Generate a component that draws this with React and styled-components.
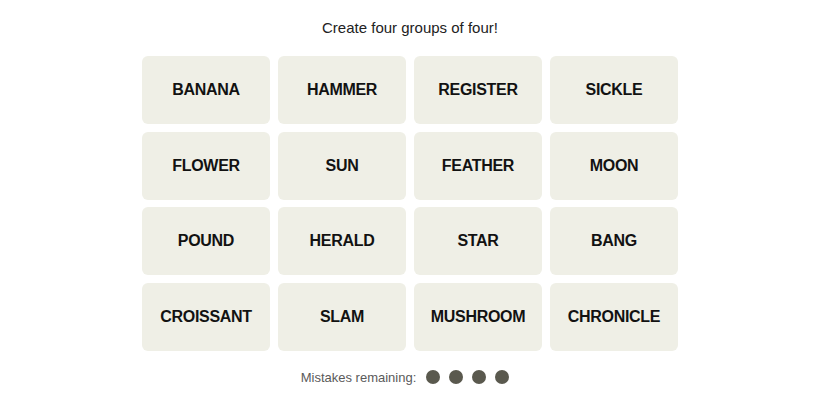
import React from "react";
import styled, { createGlobalStyle } from "styled-components";

const GlobalStyle = createGlobalStyle`
  body {
    margin: 0;
    background: #ffffff;
    font-family: "Liberation Sans", Arial, sans-serif;
  }
`;

const Page = styled.div`
  width: 820px;
  display: flex;
  flex-direction: column;
  align-items: center;
  padding-top: 18px;
`;

const Title = styled.p`
  margin: 0;
  height: 20px;
  line-height: 20px;
  font-size: 15px;
  color: #222;
  font-family: "Liberation Sans", Arial, sans-serif;
`;

const Grid = styled.div`
  margin-top: 18px;
  display: grid;
  grid-template-columns: repeat(4, 128.5px);
  grid-auto-rows: 68px;
  gap: 7.5px 7.5px;
`;

const Tile = styled.button`
  border: none;
  border-radius: 6px;
  background: #efefe6;
  color: #121212;
  font-family: "Liberation Sans", Arial, sans-serif;
  font-weight: 700;
  font-size: 16px;
  letter-spacing: -0.3px;
  text-transform: uppercase;
  display: flex;
  align-items: center;
  justify-content: center;
  padding: 0;
  cursor: pointer;
`;

const Mistakes = styled.div`
  margin-top: 19px;
  margin-right: 10px;
  display: flex;
  align-items: center;
  gap: 10px;
  font-size: 13px;
  color: #5a5a5a;
`;

const Dots = styled.div`
  display: flex;
  gap: 9px;
`;

const Dot = styled.span`
  width: 14px;
  height: 14px;
  border-radius: 50%;
  background: #5a594e;
`;

const words = [
  "Banana", "Hammer", "Register", "Sickle",
  "Flower", "Sun", "Feather", "Moon",
  "Pound", "Herald", "Star", "Bang",
  "Croissant", "Slam", "Mushroom", "Chronicle",
];

export default function App() {
  return (
    <>
      <GlobalStyle />
      <Page>
        <Title>Create four groups of four!</Title>
        <Grid>
          {words.map((w) => (
            <Tile key={w}>{w}</Tile>
          ))}
        </Grid>
        <Mistakes>
          Mistakes remaining:
          <Dots>
            {[0, 1, 2, 3].map((i) => (
              <Dot key={i} />
            ))}
          </Dots>
        </Mistakes>
      </Page>
    </>
  );
}
